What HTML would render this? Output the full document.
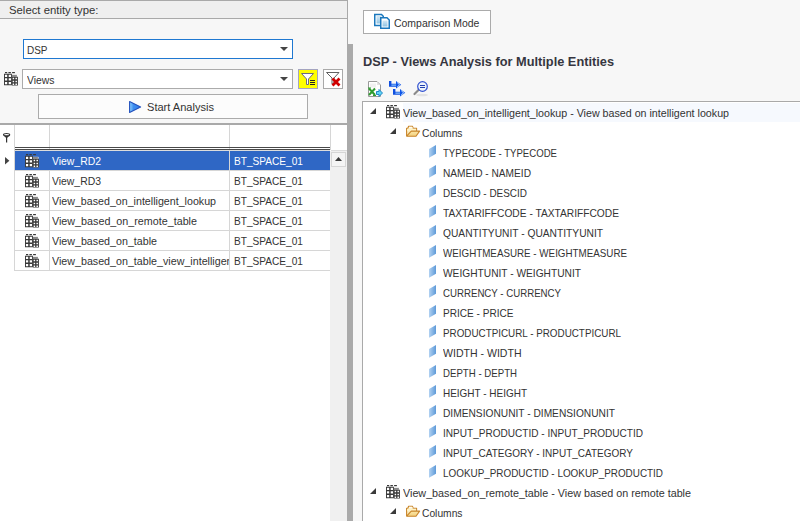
<!DOCTYPE html>
<html><head><meta charset="utf-8">
<style>
html,body{margin:0;padding:0;}
body{width:800px;height:521px;overflow:hidden;position:relative;background:#f7f7f7;font-family:"Liberation Sans",sans-serif;}
.a{position:absolute;box-sizing:border-box;}
.t{position:absolute;white-space:nowrap;transform-origin:0 0;font-family:"Liberation Sans",sans-serif;}
svg{position:absolute;overflow:visible;}
</style></head><body>
<!-- LEFT PANEL -->
<div class="a" style="left:0;top:0;width:347px;height:1px;background:#a9a9a9"></div>
<div class="a" style="left:0;top:1px;width:347px;height:17px;background:#efefef"></div>
<div class="a" style="left:0;top:18px;width:347px;height:1px;background:#a9a9a9"></div>
<div class="a" style="left:0;top:19px;width:347px;height:104px;background:#f7f7f7"></div>
<div class="a" style="left:347px;top:0;width:1px;height:44px;background:#a9a9a9"></div>
<!-- DSP combo -->
<div class="a" style="left:23px;top:39px;width:270px;height:20px;background:#fff;border:1px solid #1f78d1"></div>
<svg style="left:280px;top:47px" width="8" height="5"><polygon points="0,0 8,0 4,4" fill="#454545"/></svg>
<!-- Views combo -->
<div class="a" style="left:22px;top:69px;width:271px;height:20px;background:#fff;border:1px solid #ababab"></div>
<svg style="left:280px;top:77px" width="8" height="5"><polygon points="0,0 8,0 4,4" fill="#454545"/></svg>
<!-- table icon near Views -->
<svg style="left:4px;top:72px" width="14" height="14"><use href="#tbl"/></svg>
<!-- filter buttons -->
<div class="a" style="left:298px;top:69px;width:20px;height:20px;background:#ffff00;border:1px solid #a4a4c0"></div>
<svg style="left:298px;top:69px" width="20" height="20">
 <path d="M3.5,4.5 H15.5 L10.5,10 V15.5 H8.5 V10 Z" fill="#fff" stroke="#6a6a80" stroke-width="1"/>
 <rect x="12" y="11" width="5" height="1" fill="#222"/><rect x="12" y="13" width="5" height="1" fill="#222"/><rect x="12" y="15" width="5" height="1" fill="#222"/>
</svg>
<div class="a" style="left:323px;top:69px;width:20px;height:20px;background:#fff;border:1px solid #a9a9a9"></div>
<svg style="left:323px;top:69px" width="20" height="20">
 <path d="M3.5,3.5 H16 L11,9 V15 H9 V9 Z" fill="none" stroke="#606060" stroke-width="1"/>
 <path d="M9.5,9.5 L16.5,16.5 M16.5,9.5 L9.5,16.5" stroke="#d00000" stroke-width="2.8"/>
</svg>
<!-- Start Analysis button -->
<div class="a" style="left:38px;top:94px;width:270px;height:25px;background:#fcfcfc;border:1px solid #ababab"></div>
<svg style="left:129px;top:101px" width="14" height="14">
 <defs><linearGradient id="pg" x1="0" y1="0" x2="1" y2="0"><stop offset="0" stop-color="#8fd0ff"/><stop offset="0.35" stop-color="#3d8ef0"/><stop offset="1" stop-color="#2f7ae6"/></linearGradient></defs>
 <polygon points="0.6,0.6 11.6,6 0.6,11.4" fill="url(#pg)" stroke="#2350bd" stroke-width="1.1" stroke-linejoin="round"/>
</svg>
<!-- separator -->
<div class="a" style="left:0;top:123px;width:347px;height:2px;background:#a9a9a9"></div>
<!-- GRID -->
<div class="a" style="left:0;top:125px;width:347px;height:396px;background:#fff"></div>
<div class="a" style="left:14px;top:125px;width:1px;height:146px;background:#d6d6d6"></div>
<div class="a" style="left:49px;top:125px;width:1px;height:146px;background:#d6d6d6"></div>
<div class="a" style="left:229px;top:125px;width:1px;height:146px;background:#d6d6d6"></div>
<div class="a" style="left:330px;top:125px;width:1px;height:25px;background:#d6d6d6"></div>
<div class="a" style="left:15px;top:147px;width:315px;height:1px;background:#4a4a4a"></div>
<div class="a" style="left:15px;top:149px;width:315px;height:1px;background:#4a4a4a"></div>
<div class="a" style="left:15px;top:150px;width:315px;height:1px;background:#dcdcdc"></div>
<!-- scrollbar -->
<div class="a" style="left:331px;top:150px;width:16px;height:1px;background:#dcdcdc"></div>
<div class="a" style="left:330px;top:151px;width:17px;height:370px;background:#f0f0f0"></div>
<div class="a" style="left:331px;top:152px;width:15px;height:15px;background:#f4f4f4;border:1px solid #d6d6d6"></div>
<svg style="left:335px;top:157px" width="7" height="4"><polygon points="3.5,0 7,4 0,4" fill="#3a3a3a"/></svg>
<!-- rows -->
<div class="a" style="left:15px;top:151px;width:214px;height:19px;background:#2f67c5"></div>
<div class="a" style="left:230px;top:151px;width:100px;height:19px;background:#2f67c5"></div>
<div class="a" style="left:0;top:170px;width:330px;height:1px;background:#d6d6d6;left:15px;width:315px"></div>
<div class="a" style="left:15px;top:190px;width:315px;height:1px;background:#d6d6d6"></div>
<div class="a" style="left:15px;top:210px;width:315px;height:1px;background:#d6d6d6"></div>
<div class="a" style="left:15px;top:230px;width:315px;height:1px;background:#d6d6d6"></div>
<div class="a" style="left:15px;top:250px;width:315px;height:1px;background:#d6d6d6"></div>
<div class="a" style="left:14px;top:270px;width:316px;height:1px;background:#d6d6d6"></div>
<svg style="left:25px;top:154px" width="14" height="14"><use href="#tbl"/></svg>
<svg style="left:25px;top:174px" width="14" height="14"><use href="#tbl"/></svg>
<svg style="left:25px;top:194px" width="14" height="14"><use href="#tbl"/></svg>
<svg style="left:25px;top:214px" width="14" height="14"><use href="#tbl"/></svg>
<svg style="left:25px;top:234px" width="14" height="14"><use href="#tbl"/></svg>
<svg style="left:25px;top:254px" width="14" height="14"><use href="#tbl"/></svg>
<!-- grid filter icon + row indicator -->
<svg style="left:3px;top:133px" width="8" height="10">
 <ellipse cx="3.6" cy="1.8" rx="3.1" ry="1.3" fill="none" stroke="#333" stroke-width="1.1"/>
 <path d="M0.8,2.4 L3.6,5.6 L6.4,2.4" fill="#333"/><rect x="3" y="4.5" width="1.2" height="5" fill="#333"/>
</svg>
<svg style="left:5px;top:157px" width="5" height="8"><polygon points="0,0 4.4,3.75 0,7.5" fill="#444"/></svg>
<!-- SPLITTER -->
<div class="a" style="left:347px;top:44px;width:6px;height:477px;background:#aaaaaa"></div>
<!-- RIGHT PANEL -->
<div class="a" style="left:353px;top:0;width:447px;height:521px;background:#f7f7f7"></div>
<!-- Comparison Mode button -->
<div class="a" style="left:363px;top:10px;width:128px;height:24px;background:#fff;border:1px solid #ababab"></div>
<svg style="left:374px;top:13px" width="17" height="17">
 <defs><linearGradient id="dg" x1="0" y1="0" x2="0" y2="1"><stop offset="0" stop-color="#d4e8f4"/><stop offset="1" stop-color="#8fc3e3"/></linearGradient></defs>
 <path d="M0.75,1.5 H7.5 L9.25,3.25 V12.5 H0.75 Z" fill="#fff" stroke="#1b78bd" stroke-width="1.5"/>
 <rect x="2.5" y="3" width="5" height="7.5" fill="url(#dg)"/>
 <path d="M6.75,4.75 H13 L15.25,7 V15.25 H6.75 Z" fill="#fff" stroke="#1b78bd" stroke-width="1.5"/>
 <rect x="8.5" y="7.5" width="5" height="6" fill="url(#dg)"/>
</svg>
<!-- toolbar icons -->
<svg style="left:368px;top:81px" width="15" height="16">
 <path d="M0.5,0.5 H9 L12.5,4 V15.5 H0.5 Z" fill="#fff" stroke="#9a9a9a" stroke-width="1"/>
 <polygon points="9,1 9,4 12,4" fill="#e2e2e2"/><rect x="2" y="2.5" width="6" height="4" fill="#f0f0f0"/>
 <path d="M1,7.5 L7,14 M7,7.5 L1,14" stroke="#2f9b2f" stroke-width="2"/>
 <path d="M0,7 H3 M5,14.5 H8" stroke="#2f9b2f" stroke-width="1.2"/>
 <path d="M8.5,10.5 H11 V8.5 L14.5,12 L11,15.5 V13.5 H8.5 Z" fill="#5fd4f4" stroke="#1f86c8" stroke-width="1"/>
</svg>
<svg style="left:389px;top:81px" width="17" height="17">
 <g id="arr">
 <path d="M0,0 H2.4 V2.8 H8.5 V5.8 H0 Z" fill="#0f4fe0"/>
 <rect x="2.4" y="3.6" width="6" height="1" fill="#a8dcff"/>
 <polygon points="7,0 12.2,3.8 7,7.6" fill="#0f55e8"/>
 <path d="M8.2,1.6 L10.6,3.8 L8.2,6" fill="none" stroke="#d6f2ff" stroke-width="0.9"/>
 </g>
 <use href="#arr" x="4" y="8"/>
</svg>
<svg style="left:412px;top:80px" width="18" height="17">
 <ellipse cx="10" cy="15" rx="6" ry="1.3" fill="#000" opacity="0.08"/>
 <line x1="2.5" y1="14" x2="6.5" y2="10" stroke="#8a8a8a" stroke-width="2.2" stroke-linecap="round"/>
 <circle cx="10.5" cy="6.5" r="4.8" fill="#eef4fb" stroke="#3050d0" stroke-width="1.2"/>
 <rect x="8" y="5" width="5" height="1" fill="#2040b0"/><rect x="8" y="7" width="5" height="1" fill="#2040b0"/>
</svg>
<!-- tree -->
<div class="a" style="left:362px;top:101px;width:438px;height:420px;background:#fff;border-left:1px solid #a9a9a9;border-top:1px solid #a9a9a9"></div>
<div class="a" style="left:403px;top:103px;width:397px;height:19px;background:#f6f9fe"></div>
<svg style="left:370px;top:108px" width="6" height="6"><polygon points="6,0 6,6 0,6" fill="#3a3a3a"/></svg>
<svg style="left:386px;top:105px" width="14" height="14"><use href="#tbl"/></svg>
<svg style="left:390px;top:128px" width="6" height="6"><polygon points="6,0 6,6 0,6" fill="#3a3a3a"/></svg>
<svg style="left:406px;top:125px" width="14" height="12"><use href="#fld"/></svg>
<svg style="left:429px;top:145px" width="7" height="13"><use href="#col"/></svg>
<svg style="left:429px;top:165px" width="7" height="13"><use href="#col"/></svg>
<svg style="left:429px;top:185px" width="7" height="13"><use href="#col"/></svg>
<svg style="left:429px;top:205px" width="7" height="13"><use href="#col"/></svg>
<svg style="left:429px;top:225px" width="7" height="13"><use href="#col"/></svg>
<svg style="left:429px;top:245px" width="7" height="13"><use href="#col"/></svg>
<svg style="left:429px;top:265px" width="7" height="13"><use href="#col"/></svg>
<svg style="left:429px;top:285px" width="7" height="13"><use href="#col"/></svg>
<svg style="left:429px;top:305px" width="7" height="13"><use href="#col"/></svg>
<svg style="left:429px;top:325px" width="7" height="13"><use href="#col"/></svg>
<svg style="left:429px;top:345px" width="7" height="13"><use href="#col"/></svg>
<svg style="left:429px;top:365px" width="7" height="13"><use href="#col"/></svg>
<svg style="left:429px;top:385px" width="7" height="13"><use href="#col"/></svg>
<svg style="left:429px;top:405px" width="7" height="13"><use href="#col"/></svg>
<svg style="left:429px;top:425px" width="7" height="13"><use href="#col"/></svg>
<svg style="left:429px;top:445px" width="7" height="13"><use href="#col"/></svg>
<svg style="left:429px;top:465px" width="7" height="13"><use href="#col"/></svg>
<svg style="left:370px;top:488px" width="6" height="6"><polygon points="6,0 6,6 0,6" fill="#3a3a3a"/></svg>
<svg style="left:386px;top:485px" width="14" height="14"><use href="#tbl"/></svg>
<svg style="left:390px;top:508px" width="6" height="6"><polygon points="6,0 6,6 0,6" fill="#3a3a3a"/></svg>
<svg style="left:406px;top:505px" width="14" height="12"><use href="#fld"/></svg>
<!-- defs -->
<svg width="0" height="0" style="left:0;top:0">
 <defs>
  <g id="tbl" fill="#383838">
   <rect x="0.5" y="2.2" width="7.5" height="10.8" fill="#fff"/><rect x="8" y="2.85" width="5.5" height="10.5" fill="#fff"/>
   <rect x="1" y="0" width="2.2" height="1.2"/><rect x="4.4" y="0" width="2.5" height="1.2"/><rect x="8.1" y="0" width="2.8" height="1.2"/>
   <path d="M0,1.8 H7.9 V13.2 H0 Z M0.95,2.85 h2.25 v2.25 h-2.25 Z M4.7,2.85 h2.3 v2.25 h-2.3 Z M0.95,6.3 h2.25 v2.2 h-2.25 Z M4.7,6.3 h2.3 v2.2 h-2.3 Z M0.95,9.9 h2.25 v2.3 h-2.25 Z M4.7,9.9 h2.3 v2.3 h-2.3 Z" fill-rule="evenodd"/>
   <rect x="8" y="2.85" width="4.9" height="1.9" fill="#8a8a8a"/>
   <path d="M7.9,4.7 H13.9 V13.6 H7.9 Z M8.65,5.75 h1.5 v1.5 h-1.5 Z M8.65,8.65 h1.5 v1.5 h-1.5 Z M8.65,11.45 h1.5 v1.5 h-1.5 Z M11.45,5.75 h1.5 v1.5 h-1.5 Z M11.45,8.65 h1.5 v1.5 h-1.5 Z M11.45,11.45 h1.5 v1.5 h-1.5 Z" fill-rule="evenodd"/>
  </g>
  <linearGradient id="fg" x1="0" y1="0" x2="0" y2="1"><stop offset="0" stop-color="#fbe7a8"/><stop offset="1" stop-color="#f3cf7c"/></linearGradient>
  <g id="fld">
   <path d="M0.6,11.3 V3.2 H1.8 L2.6,1.2 H6.4 L7.2,3.2 H10.6 V6" fill="#fbeab8" stroke="#c8842a" stroke-width="1.1" stroke-linejoin="round"/>
   <rect x="3" y="1.8" width="3.5" height="1.6" fill="#fffdf2"/>
   <rect x="1.2" y="3.8" width="8.9" height="2.4" fill="#fff3c6"/>
   <path d="M5.3,6.1 H13.6 L10,11.3 H0.9 L1.3,10.4 Z" fill="url(#fg)" stroke="#c8842a" stroke-width="1.1" stroke-linejoin="round"/>
  </g>
  <linearGradient id="cg" x1="0" y1="0" x2="1" y2="0"><stop offset="0" stop-color="#b2d2f2"/><stop offset="1" stop-color="#5e9ad8"/></linearGradient>
  <polygon id="col" points="0,4 7,0 7,8.75 0,12.75" fill="url(#cg)"/>
 </defs>
</svg>
<div class="t" style="left:9.00px;top:4px;font-size:11px;line-height:13px;color:#333333;transform:scaleX(1.0308);">Select entity type:</div>
<div class="t" style="left:26.50px;top:44px;font-size:11px;line-height:13px;color:#333333;transform:scaleX(0.9061);">DSP</div>
<div class="t" style="left:26.50px;top:74px;font-size:11px;line-height:13px;color:#333333;transform:scaleX(0.9432);">Views</div>
<div class="t" style="left:147.00px;top:101px;font-size:11px;line-height:13px;color:#333333;transform:scaleX(1.0054);">Start Analysis</div>
<div class="a" style="left:50px;top:155px;width:179px;height:13px;overflow:hidden"><div class="t" style="left:1.50px;top:0px;font-size:11px;line-height:13px;color:#ffffff;transform:scaleX(0.9463);">View_RD2</div></div>
<div class="t" style="left:234.00px;top:155px;font-size:11px;line-height:13px;color:#ffffff;transform:scaleX(0.9198);">BT_SPACE_01</div>
<div class="a" style="left:50px;top:175px;width:179px;height:13px;overflow:hidden"><div class="t" style="left:1.50px;top:0px;font-size:11px;line-height:13px;color:#333333;transform:scaleX(0.9463);">View_RD3</div></div>
<div class="t" style="left:234.00px;top:175px;font-size:11px;line-height:13px;color:#333333;transform:scaleX(0.9198);">BT_SPACE_01</div>
<div class="a" style="left:50px;top:195px;width:179px;height:13px;overflow:hidden"><div class="t" style="left:1.50px;top:0px;font-size:11px;line-height:13px;color:#333333;transform:scaleX(0.9692);">View_based_on_intelligent_lookup</div></div>
<div class="t" style="left:234.00px;top:195px;font-size:11px;line-height:13px;color:#333333;transform:scaleX(0.9198);">BT_SPACE_01</div>
<div class="a" style="left:50px;top:215px;width:179px;height:13px;overflow:hidden"><div class="t" style="left:1.50px;top:0px;font-size:11px;line-height:13px;color:#333333;transform:scaleX(0.9769);">View_based_on_remote_table</div></div>
<div class="t" style="left:234.00px;top:215px;font-size:11px;line-height:13px;color:#333333;transform:scaleX(0.9198);">BT_SPACE_01</div>
<div class="a" style="left:50px;top:235px;width:179px;height:13px;overflow:hidden"><div class="t" style="left:1.50px;top:0px;font-size:11px;line-height:13px;color:#333333;transform:scaleX(0.9717);">View_based_on_table</div></div>
<div class="t" style="left:234.00px;top:235px;font-size:11px;line-height:13px;color:#333333;transform:scaleX(0.9198);">BT_SPACE_01</div>
<div class="a" style="left:50px;top:255px;width:179px;height:13px;overflow:hidden"><div class="t" style="left:1.50px;top:0px;font-size:11px;line-height:13px;color:#333333;transform:scaleX(0.9722);">View_based_on_table_view_intelligent_lookup</div></div>
<div class="t" style="left:234.00px;top:255px;font-size:11px;line-height:13px;color:#333333;transform:scaleX(0.9198);">BT_SPACE_01</div>
<div class="t" style="left:394.20px;top:17px;font-size:11px;line-height:13px;color:#333333;transform:scaleX(0.9502);">Comparison Mode</div>
<div class="t" style="left:363.25px;top:54px;font-size:13px;line-height:15px;color:#363640;font-weight:bold;transform:scaleX(0.9824);">DSP - Views Analysis for Multiple Entities</div>
<div class="t" style="left:402.50px;top:107px;font-size:11px;line-height:13px;color:#333333;transform:scaleX(0.9704);">View_based_on_intelligent_lookup - View based on intelligent lookup</div>
<div class="t" style="left:422.30px;top:127px;font-size:11px;line-height:13px;color:#333333;transform:scaleX(0.9330);">Columns</div>
<div class="t" style="left:442.50px;top:147px;font-size:11px;line-height:13px;color:#333333;transform:scaleX(0.8728);">TYPECODE - TYPECODE</div>
<div class="t" style="left:442.50px;top:167px;font-size:11px;line-height:13px;color:#333333;transform:scaleX(0.9230);">NAMEID - NAMEID</div>
<div class="t" style="left:442.50px;top:187px;font-size:11px;line-height:13px;color:#333333;transform:scaleX(0.9041);">DESCID - DESCID</div>
<div class="t" style="left:442.50px;top:207px;font-size:11px;line-height:13px;color:#333333;transform:scaleX(0.9280);">TAXTARIFFCODE - TAXTARIFFCODE</div>
<div class="t" style="left:442.50px;top:227px;font-size:11px;line-height:13px;color:#333333;transform:scaleX(0.9295);">QUANTITYUNIT - QUANTITYUNIT</div>
<div class="t" style="left:442.50px;top:247px;font-size:11px;line-height:13px;color:#333333;transform:scaleX(0.8908);">WEIGHTMEASURE - WEIGHTMEASURE</div>
<div class="t" style="left:442.50px;top:267px;font-size:11px;line-height:13px;color:#333333;transform:scaleX(0.9268);">WEIGHTUNIT - WEIGHTUNIT</div>
<div class="t" style="left:442.50px;top:287px;font-size:11px;line-height:13px;color:#333333;transform:scaleX(0.8789);">CURRENCY - CURRENCY</div>
<div class="t" style="left:442.50px;top:307px;font-size:11px;line-height:13px;color:#333333;transform:scaleX(0.9154);">PRICE - PRICE</div>
<div class="t" style="left:442.50px;top:327px;font-size:11px;line-height:13px;color:#333333;transform:scaleX(0.8952);">PRODUCTPICURL - PRODUCTPICURL</div>
<div class="t" style="left:442.50px;top:347px;font-size:11px;line-height:13px;color:#333333;transform:scaleX(0.9588);">WIDTH - WIDTH</div>
<div class="t" style="left:442.50px;top:367px;font-size:11px;line-height:13px;color:#333333;transform:scaleX(0.8774);">DEPTH - DEPTH</div>
<div class="t" style="left:442.50px;top:387px;font-size:11px;line-height:13px;color:#333333;transform:scaleX(0.9061);">HEIGHT - HEIGHT</div>
<div class="t" style="left:442.50px;top:407px;font-size:11px;line-height:13px;color:#333333;transform:scaleX(0.9268);">DIMENSIONUNIT - DIMENSIONUNIT</div>
<div class="t" style="left:442.50px;top:427px;font-size:11px;line-height:13px;color:#333333;transform:scaleX(0.9141);">INPUT_PRODUCTID - INPUT_PRODUCTID</div>
<div class="t" style="left:442.50px;top:447px;font-size:11px;line-height:13px;color:#333333;transform:scaleX(0.9080);">INPUT_CATEGORY - INPUT_CATEGORY</div>
<div class="t" style="left:442.50px;top:467px;font-size:11px;line-height:13px;color:#333333;transform:scaleX(0.8999);">LOOKUP_PRODUCTID - LOOKUP_PRODUCTID</div>
<div class="t" style="left:402.50px;top:487px;font-size:11px;line-height:13px;color:#333333;transform:scaleX(0.9784);">View_based_on_remote_table - View based on remote table</div>
<div class="t" style="left:422.30px;top:507px;font-size:11px;line-height:13px;color:#333333;transform:scaleX(0.9330);">Columns</div>
</body></html>
